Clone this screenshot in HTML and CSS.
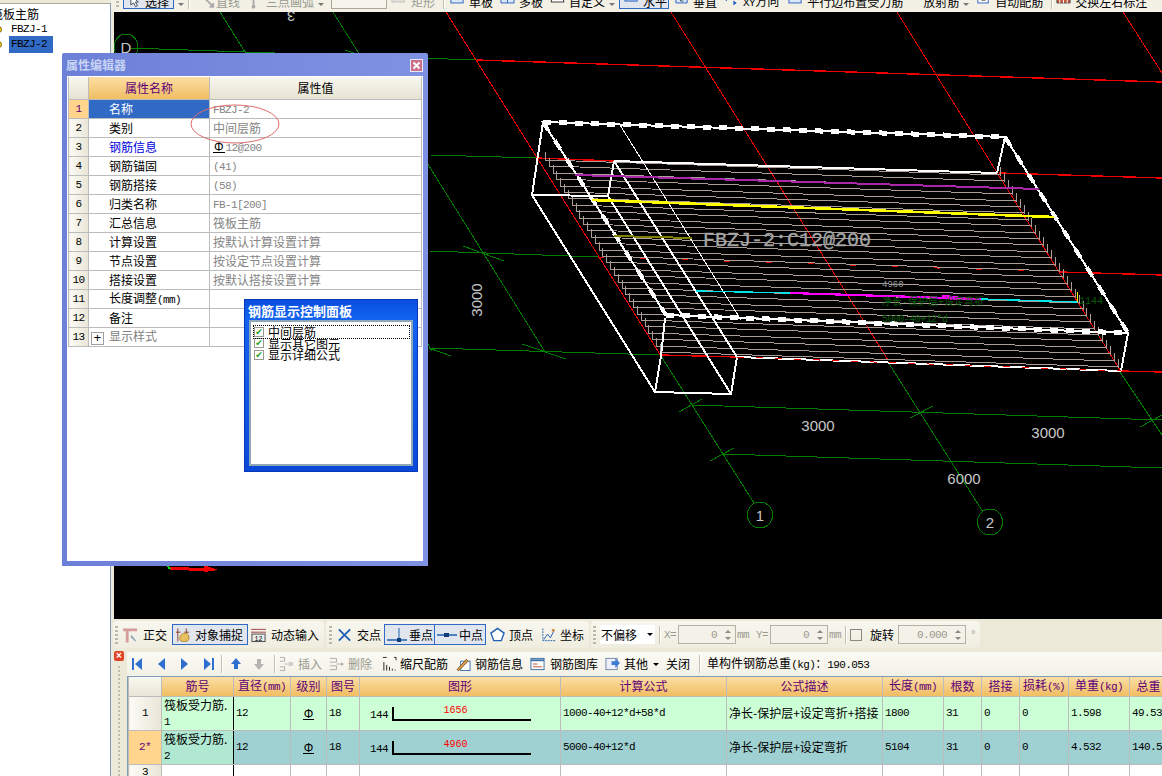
FILE: index.html
```html
<!DOCTYPE html>
<html>

<head>
    <meta http-equiv="Content-Type" content="text/html; charset=utf-8" />
    <title>钢筋三维</title>
    <link rel="stylesheet" href="styles.css">
</head>

<body>
    <div class="app">
        <!-- 左侧构件列表 -->
        <div class="tree">
            <p class="tree-root">筏板主筋</p>
            <p class="tree-item"><i class="ball"></i><span class="lat">FBZJ-1</span></p>
            <p class="tree-item"><i class="ball"></i><span class="lat sel">FBZJ-2</span></p>
        </div>

        <div class="main">
            <!-- 顶部工具条，上半部分被截掉 -->
            <div class="topbar">
                <span class="grip g-top"></span>
                <span class="tool btn-on t-sel"><svg class="ic" viewBox="0 0 16 16"><path d="M3 1v10l3-2 2 4 2-1-2-4h3z" fill="#fff" stroke="#345"/></svg>选择</span>
                <span class="arrow"></span>
                <span class="sep"></span>
                <span class="tool off t-line"><svg class="ic" viewBox="0 0 16 16"><path d="M2 2l11 11M9 13h4V9" fill="none" stroke="#aaa" stroke-width="2"/></svg>直线</span>
                <span class="tool off t-arc"><svg class="ic" viewBox="0 0 16 16"><path d="M8 0v13" stroke="#aaa" stroke-width="2"/><circle cx="8" cy="13" r="2" fill="#aaa"/></svg>三点画弧</span>
                <span class="arrow"></span>
                <span class="topinput"></span>
                <span class="tool off t-rect"><svg class="ic" viewBox="0 0 16 16"><rect x="1" y="0" width="13" height="8" fill="#e4e2d6" stroke="#bbb"/></svg>矩形</span>
                <span class="sep sep-top"></span>
                <span class="tool t-first"><svg class="ic" viewBox="0 0 16 16"><rect x="1" y="0" width="13" height="9" fill="#dbe8fb" stroke="#2b5fc0"/></svg>单板</span>
                <span class="tool"><svg class="ic" viewBox="0 0 16 16"><path d="M1 0h14v9H1zM8 0v9" fill="#dbe8fb" stroke="#2b5fc0"/></svg>多板</span>
                <span class="tool"><svg class="ic" viewBox="0 0 16 16"><path d="M1 8l3-8h8l3 8z" fill="#fff" stroke="#333"/></svg>自定义</span>
                <span class="arrow"></span>
                <span class="tool btn-on t-flat"><svg class="ic" viewBox="0 0 16 16"><rect x="1" y="0" width="13" height="7" fill="#bcd0ee" stroke="#2b5fc0"/></svg>水平</span>
                <span class="tool t-vert"><svg class="ic" viewBox="0 0 16 16"><path d="M2 0h12v9H2z" fill="#dbe8fb" stroke="#2b5fc0"/><path d="M7 0v7h3" fill="none" stroke="#345"/></svg>垂直</span>
                <span class="tool"><svg class="ic" viewBox="0 0 16 16"><path d="M2 1l3 3-3 3M1 4h9M10 7l3 2-3 2" fill="#2b5fc0" stroke="#2b5fc0"/></svg><span><span class="lat">XY</span>方向</span></span>
                <span class="tool t-par"><svg class="ic" viewBox="0 0 16 16"><rect x="1" y="0" width="13" height="9" fill="#dbe8fb" stroke="#2b5fc0"/><path d="M7.500 2l-2 3h4z" fill="#2b5fc0"/></svg>平行边布置受力筋</span>
                <span class="tool t-ray">放射筋</span>
                <span class="arrow"></span>
                <span class="tool"><svg class="ic" viewBox="0 0 16 16"><rect x="2" y="0" width="11" height="9" fill="#fff" stroke="#2b5fc0"/><path d="M6 0v6h4" fill="none" stroke="#333"/></svg>自动配筋</span>
                <span class="sep sep-end"></span>
                <span class="tool t-first"><svg class="ic" viewBox="0 0 16 16"><path d="M1 0h14v9H1z" fill="#c85a3c" stroke="#444"/><path d="M4 0v9M8 0v9M12 0v9" stroke="#fff"/></svg>交换左右标注</span>
            </div>

            <!-- 三维视图 -->
            <div class="view">
                <svg class="scene" viewBox="114 12 1048 607" width="1048" height="607">
                    <g class="g-line" fill="none">
                        <path d="M130 48L477 60M430 155L537 158M430 251L598 257M430 348L661 355M692 405L1162 420M723 454L1162 468"/>
                        <path d="M220 12L432 351M333 12L545 352M661 356L754 503M888 362L983 512M1120 372L1162 435"/>
                        <path d="M463 246L504 261M522 344L566 359M429 348L451 356M679 412L702 399M710 461L734 448M910 418L933 406M1140 427L1162 415M345 50L362 56"/>
                        <ellipse cx="126" cy="47" rx="12" ry="13"/>
                        <ellipse cx="760" cy="515" rx="12.500" ry="13"/>
                        <ellipse cx="990" cy="522" rx="12.500" ry="13"/>
                    </g>
                    <g class="r-line" fill="none">
                        <path d="M446 12L661 356M671 12L888 360M897 12L1120 370M1123 12L1162 73"/>
                    </g>
                    <g class="r-line r-thick" fill="none">
                        <path d="M477 60L1162 82M537 158L614 161M999 173L1162 178M1060 272L1162 275M661 355L737 357M1121 371L1162 372"/>
                    </g>
                    <path class="r-dash" d="M598 257L1060 272"/>

                    <!-- 31 根受力筋 -->
                    <path class="rebar" d="M545 152v8l455 15v-8M549 158v8l455 15v-8M553 165v8l455 15v-8M556 171v8l456 15v-8M560 178v8l456 15v-8M564 184v8l456 15v-8M568 190v8l456 15v-8M572 197v8l456 15v-8M576 203v8l455 15v-8M579 210v8l456 15v-8M583 216v8l456 15v-8M587 222v8l456 15v-8M591 229v8l456 15v-8M595 235v8l456 15v-8M599 242v8l456 15v-8M602 248v8l457 15v-8M606 254v8l457 15v-8M610 261v8l457 15v-8M614 267v8l457 15v-8M618 274v8l457 15v-8M622 280v8l457 15v-8M625 286v8l458 15v-8M629 293v8l457 15v-8M633 299v8l457 15v-8M637 306v8l457 15v-8M641 312v8l457 15v-8M645 318v8l457 15v-8M648 325v8l458 15v-8M652 331v8l458 15v-8M656 338v8l458 15v-8M660 344v8l458 15v-8"/>

                    <g class="w-line" fill="none">
                        <path d="M543 122L532 195L655 392L731 394L737 357M655 392L661 356L665 318M532 195L608 196L614 161M608 196L731 394M614 161L737 357M1005 137L997 173M1128 333L1121 371"/>
                        <path d="M614 161L997 173M737 357L1121 371"/>
                        <path class="w-thin" d="M620 125L741 320"/>
                    </g>
                    <path class="w-dash-base" d="M543 122L1005 137L1128 333L666 315z"/>
                    <path class="w-dash" d="M543 122L1005 137M666 315L1128 333"/>
                    <path class="w-dash w-dash-side" d="M1005 137L1128 333M543 122L666 315"/>
                    <path class="red-dash" d="M737 357L1121 371"/>

                    <path class="c-purple" d="M575 175L1039 189"/>
                    <path class="c-yellow" d="M592 200L1054 217"/>
                    <path class="c-olive" d="M614 236L692 238"/>
                    <path class="c-cyan" d="M696 291L790 293M981 299L1077 302"/>
                    <path class="c-magenta" d="M790 293L981 299"/>
                    <path class="c-magenta c-fat" d="M942 297L958 298"/>
                    <path class="c-yellow c-tick" d="M1077 292V302"/>

                    <path class="axis-x" d="M170 568L207 570"/>
                    <path class="axis-head" d="M204 565L218 570L204 572z"/>
                    <path class="axis-y" d="M166 564L170 569"/>

                    <text class="dim" x="818" y="431" text-anchor="middle">3000</text>
                    <text class="dim" x="1048" y="438" text-anchor="middle">3000</text>
                    <text class="dim" x="964" y="484" text-anchor="middle">6000</text>
                    <text class="dim" transform="translate(482 300) rotate(-90)" text-anchor="middle">3000</text>
                    <text class="dim" x="760" y="521" text-anchor="middle">1</text>
                    <text class="dim" x="990" y="528" text-anchor="middle">2</text>
                    <text class="dim" transform="translate(291 11) rotate(180)" text-anchor="middle">3</text>
                    <text class="dim" x="126" y="53" text-anchor="middle">D</text>
                    <text class="bar-label" x="703" y="246" textLength="168">FBZJ-2:C12@200</text>
                    <text class="small-gray" x="882" y="287">4960</text>
                    <text class="small-green" x="882" y="305">净长-保护层+设定弯折</text>
                    <text class="small-green" x="882" y="322" textLength="66">5000-40+12*d</text>
                    <text class="small-green" x="1079" y="304" textLength="24">1144</text>
                </svg>
            </div>

            <!-- 捕捉工具条 -->
            <div class="snapbar">
                <div class="seg seg-a">
                    <span class="grip"></span>
                    <span class="tool"><svg class="ic" viewBox="0 0 16 16"><path d="M0 1h15v3H6v12H3V4H0z" fill="#d89c9c"/><path d="M9 8l5 6-1 1-5-5z" fill="#8fa3b5"/></svg>正交</span>
                    <span class="tool btn-on"><svg class="ic" viewBox="0 0 16 16"><path d="M3 1v14M12 1v14" stroke="#8a3c2c"/><path d="M1 5h5M10 5h5" stroke="#8a3c2c"/><path d="M5 12c0-4 3-6 6-6 2 0 4 2 4 5s-2 4-5 4-5-1-5-3z" fill="#e8c060" stroke="#b08a30"/></svg>对象捕捉</span>
                    <span class="tool t-dyn"><svg class="ic" viewBox="0 0 16 16"><path d="M0 2h16M0 5h16" stroke="#a04040"/><rect x="1" y="7" width="14" height="8" fill="#eee" stroke="#444"/><text class="ic-text" x="8" y="14" text-anchor="middle">12</text></svg>动态输入</span>
                </div>
                <div class="seg seg-b">
                    <span class="grip"></span>
                    <span class="tool"><svg class="ic" viewBox="0 0 16 16"><path d="M2 2l12 12M14 2L2 14" stroke="#1f5fb4" stroke-width="2" fill="none"/></svg>交点</span>
                    <span class="tool btn-on t-snap"><svg class="ic ic-w" viewBox="0 0 20 16"><path d="M0 13h20" stroke="#1f5fb4" stroke-width="1.500"/><path d="M12 1v12" stroke="#1f5fb4"/><rect x="10" y="11" width="4" height="4" fill="#123c78"/></svg>垂点</span>
                    <span class="tool btn-on t-snap t-snap2"><svg class="ic ic-w" viewBox="0 0 20 16"><path d="M0 8h20" stroke="#1f5fb4" stroke-width="1.500"/><rect x="7" y="6" width="5" height="4" fill="#123c78"/></svg>中点</span>
                    <span class="tool t-top"><svg class="ic" viewBox="0 0 16 16"><path d="M8 1l7 5-3 8H4L1 6z" fill="#fff" stroke="#1f5fb4" stroke-width="1.500"/></svg>顶点</span>
                    <span class="tool t-xy"><svg class="ic" viewBox="0 0 16 16"><path d="M2 1v13h13" fill="none" stroke="#1f5fb4" stroke-dasharray="2 1"/><path d="M3 13l4-6 3 4 4-8" fill="none" stroke="#1f5fb4"/><circle cx="13" cy="3" r="1.500" fill="#d08030"/></svg>坐标</span>
                </div>
                <div class="seg seg-c">
                    <span class="grip"></span>
                    <span class="select">不偏移<span class="arrow arrow-dark"></span></span>
                    <span class="sep"></span>
                    <span class="lat off coord">X=</span>
                    <span class="spin"><span class="lat">0</span><span class="updown"><i></i><i></i></span></span>
                    <span class="lat off unit">mm</span>
                    <span class="lat off coord coord-y">Y=</span>
                    <span class="spin"><span class="lat">0</span><span class="updown"><i></i><i></i></span></span>
                    <span class="lat off unit">mm</span>
                    <span class="sep"></span>
                    <span class="check-empty"></span>
                    <span class="rot">旋转</span>
                    <span class="spin spin-rot"><span class="lat">0.000</span><span class="updown"><i></i><i></i></span></span>
                    <span class="lat off">°</span>
                </div>
            </div>

            <!-- 钢筋表格 -->
            <div class="panel">
                <div class="dock">
                    <span class="dock-close">×</span>
                    <span class="dock-dots"></span>
                </div>
                <div class="panel-body">
                    <div class="gridbar">
                        <span class="nav-ic"><svg viewBox="0 0 12 14" width="12" height="14"><path d="M1 1h2v12H1zM11 1v12L4 7z" fill="#2e6fd0"/></svg></span>
                        <span class="nav-ic"><svg viewBox="0 0 12 14" width="12" height="14"><path d="M10 1v12L3 7z" fill="#2e6fd0"/></svg></span>
                        <span class="nav-ic"><svg viewBox="0 0 12 14" width="12" height="14"><path d="M2 1v12l7-6z" fill="#2e6fd0"/></svg></span>
                        <span class="nav-ic nav-last"><svg viewBox="0 0 12 14" width="12" height="14"><path d="M1 1v12l7-6zM9 1h2v12H9z" fill="#2e6fd0"/></svg></span>
                        <span class="sep sep-nav"></span>
                        <span class="nav-ic nav-up"><svg viewBox="0 0 12 14" width="12" height="14"><path d="M6 1l5 6H8v5H4V7H1z" fill="#2e6fd0"/></svg></span>
                        <span class="nav-ic nav-last"><svg viewBox="0 0 12 14" width="12" height="14"><path d="M6 13l5-6H8V2H4v5H1z" fill="#b4b4b4"/></svg></span>
                        <span class="sep sep-tight"></span>
                        <span class="tool off t-ins"><svg class="ic" viewBox="0 0 16 16"><path d="M1 1h5v4H1M1 11h5v4H1M6 8h3" fill="none" stroke="#aaa"/><rect x="10" y="6" width="5" height="4" fill="#ccc"/></svg>插入</span>
                        <span class="tool off"><svg class="ic" viewBox="0 0 16 16"><path d="M1 2h7v4H1M1 10h7v4H1M8 8h6" fill="none" stroke="#aaa"/><path d="M13 6l3 2-3 2z" fill="#aaa"/></svg>删除</span>
                        <span class="tool t-scale"><svg class="ic" viewBox="0 0 16 16"><path d="M1 1h4M13 1h2M15 1v3M2 6v9M5 9v6M8 11v4M11 13v2M14 14v1" fill="none" stroke="#222"/></svg>缩尺配筋</span>
                        <span class="tool t-info"><svg class="ic" viewBox="0 0 16 16"><rect x="5" y="5" width="10" height="10" fill="#fff" stroke="#3a6ea5"/><path d="M1 14L11 3l2 2L3 15z" fill="#d8a050" stroke="#805020"/></svg>钢筋信息</span>
                        <span class="tool t-lib"><svg class="ic" viewBox="0 0 16 16"><rect x="1" y="2" width="14" height="12" fill="#fff" stroke="#3a6ea5"/><path d="M1 3h14v2H1z" fill="#3a6ea5"/><path d="M3 8h5M3 11h10" stroke="#c05030"/></svg>钢筋图库</span>
                        <span class="tool"><svg class="ic" viewBox="0 0 16 16"><rect x="1" y="2" width="12" height="12" fill="#eef" stroke="#7088a8"/><path d="M7 5h4V2l5 5-5 5V9H7z" fill="#3a7ad0"/></svg>其他</span>
                        <span class="arrow arrow-dark"></span>
                        <span class="tool">关闭</span>
                        <span class="sep"></span>
                        <span class="tool"><span>单构件钢筋总重<span class="lat">(kg)</span>：<span class="lat">190.053</span></span></span>
                    </div>
                    <div class="gridwrap">
                        <table class="grid">
                            <colgroup>
                                <col class="c1"><col class="c2"><col class="c3"><col class="c4"><col class="c5"><col class="c6"><col class="c7"><col class="c8"><col class="c9"><col class="c10"><col class="c11"><col class="c12"><col class="c13"><col class="c14">
                            </colgroup>
                            <tr class="head">
                                <th class="corner"></th><th>筋号</th><th>直径<span class="lat">(mm)</span></th><th>级别</th><th>图号</th><th>图形</th><th>计算公式</th><th>公式描述</th><th>长度<span class="lat">(mm)</span></th><th>根数</th><th>搭接</th><th>损耗<span class="lat">(%)</span></th><th>单重<span class="lat">(kg)</span></th><th>总重</th>
                            </tr>
                            <tr class="row-a">
                                <td class="rh lat">1</td>
                                <td class="name wall">筏板受力筋.<br><span class="lat">1</span></td>
                                <td class="lat">12</td>
                                <td class="ctr"><span class="grade">Φ</span></td>
                                <td class="lat">18</td>
                                <td class="shape"><span class="shape-n lat">144</span><span class="shape-l"><span class="shape-v">1656</span></span></td>
                                <td class="lat">1000-40+12*d+58*d</td>
                                <td class="desc">净长-保护层+设定弯折+搭接</td>
                                <td class="lat">1800</td><td class="lat">31</td><td class="lat">0</td><td class="lat">0</td><td class="lat">1.598</td><td class="lat">49.538</td>
                            </tr>
                            <tr class="row-b">
                                <td class="rh rh-on lat">2*</td>
                                <td class="name name-b wall">筏板受力筋.<br><span class="lat">2</span></td>
                                <td class="lat">12</td>
                                <td class="ctr"><span class="grade">Φ</span></td>
                                <td class="lat">18</td>
                                <td class="shape"><span class="shape-n lat">144</span><span class="shape-l"><span class="shape-v">4960</span></span></td>
                                <td class="lat">5000-40+12*d</td>
                                <td class="desc">净长-保护层+设定弯折</td>
                                <td class="lat">5104</td><td class="lat">31</td><td class="lat">0</td><td class="lat">0</td><td class="lat">4.532</td><td class="lat">140.515</td>
                            </tr>
                            <tr class="row-c">
                                <td class="rh lat">3</td>
                                <td class="wall"></td><td></td><td></td><td></td><td></td><td></td><td></td><td></td><td></td><td></td><td></td><td></td><td></td>
                            </tr>
                        </table>
                    </div>
                </div>
            </div>
        </div>

        <!-- 属性编辑器窗口 -->
        <div class="win-prop">
            <div class="win-title">属性编辑器<svg class="win-x" viewBox="0 0 13 13" width="13" height="13"><rect x=".5" y=".5" width="12" height="12" fill="#c96f8c" stroke="#e8e8f8"/><path d="M3.500 3.500l6 6M9.500 3.500l-6 6" stroke="#fff" stroke-width="2"/></svg></div>
            <div class="win-body">
                <table class="props">
                    <colgroup><col class="p1"><col class="p2"><col class="p3"></colgroup>
                    <tr class="p-head"><th class="p-corner"></th><th class="p-on">属性名称</th><th>属性值</th></tr>
                    <tr><td class="rh rh-on lat">1</td><td class="k k-sel">名称</td><td class="v"><span class="lat">FBZJ-2</span></td></tr>
                    <tr><td class="rh lat">2</td><td class="k">类别</td><td class="v">中间层筋</td></tr>
                    <tr><td class="rh lat">3</td><td class="k k-blue">钢筋信息</td><td class="v"><span class="grade grade-sm">Φ</span><span class="lat">12@200</span></td></tr>
                    <tr><td class="rh lat">4</td><td class="k">钢筋锚固</td><td class="v"><span class="lat">(41)</span></td></tr>
                    <tr><td class="rh lat">5</td><td class="k">钢筋搭接</td><td class="v"><span class="lat">(58)</span></td></tr>
                    <tr><td class="rh lat">6</td><td class="k">归类名称</td><td class="v"><span class="lat">FB-1[200]</span></td></tr>
                    <tr><td class="rh lat">7</td><td class="k">汇总信息</td><td class="v">筏板主筋</td></tr>
                    <tr><td class="rh lat">8</td><td class="k">计算设置</td><td class="v">按默认计算设置计算</td></tr>
                    <tr><td class="rh lat">9</td><td class="k">节点设置</td><td class="v">按设定节点设置计算</td></tr>
                    <tr><td class="rh lat">10</td><td class="k">搭接设置</td><td class="v">按默认搭接设置计算</td></tr>
                    <tr><td class="rh lat">11</td><td class="k">长度调整<span class="lat">(mm)</span></td><td class="v"></td></tr>
                    <tr><td class="rh lat">12</td><td class="k">备注</td><td class="v"></td></tr>
                    <tr><td class="rh lat">13</td><td class="k k-more"><span class="plus">+</span>显示样式</td><td class="v"></td></tr>
                </table>
                <svg class="mark" viewBox="0 0 92 42" width="92" height="42"><ellipse cx="46" cy="21" rx="44" ry="19" fill="none" stroke="#e06a6a"/></svg>
            </div>
        </div>

        <!-- 钢筋显示控制面板 -->
        <div class="win-ctrl">
            <div class="ctrl-title">钢筋显示控制面板</div>
            <ul class="ctrl-list">
                <li class="focus"><span class="cb">✔</span>中间层筋</li>
                <li><span class="cb">✔</span>显示其它图元</li>
                <li><span class="cb">✔</span>显示详细公式</li>
            </ul>
        </div>
    </div>
</body>

</html>
```

FILE: styles.css
```css
* {
    margin: 0;
    padding: 0;
    box-sizing: border-box;
    list-style: none;
}

html,
body {
    width: 1162px;
    height: 776px;
    overflow: hidden;
}

body {
    font: 12px/14px "Noto Sans CJK SC", sans-serif;
    color: #000;
    background: #ece9d8;
}

.lat {
    font-family: "Liberation Mono", monospace;
    font-size: 11px;
    letter-spacing: -.6px;
}

.app {
    position: relative;
    width: 1162px;
    height: 776px;
    display: flex;
    overflow: hidden;
}

/* 左侧 */
.tree {
    width: 111px;
    height: 776px;
    flex: none;
    margin-top: 3px;
    padding-top: 3px;
    background: #fff;
    border-right: 1px solid #7f9db9;
    border-top: 1px solid #aca899;
    overflow: hidden;
}

.tree-root {
    margin-left: -9px;
    height: 15px;
    line-height: 14px;
}

.tree-item {
    height: 15px;
    display: flex;
    align-items: center;
    line-height: 15px;
}

.ball {
    width: 7px;
    height: 7px;
    margin-left: -5px;
    margin-right: 9px;
    border-radius: 50%;
    background: #f3d820;
    border: 1px solid #806000;
}

.sel {
    background: #316ac5;
    color: #000;
    margin-left: -2px;
    padding: 1px 6px 1px 2px;
}

.main {
    flex: 1;
    display: flex;
    flex-direction: column;
    min-width: 0;
}

/* 顶部工具条 */
.topbar {
    height: 12px;
    display: flex;
    align-items: flex-end;
    padding: 0 0 3px 5px;
    gap: 4px;
    background: #f3f1e6;
    white-space: nowrap;
    overflow: hidden;
}

.tool {
    display: flex;
    align-items: center;
    gap: 5px;
    height: 16px;
    flex: none;
}

.topbar .tool {
    height: 14px;
    padding-bottom: 1px;
    gap: 4px;
    margin-left: 3px;
}

.ic {
    width: 15px;
    height: 16px;
    flex: none;
}

.ic-w {
    width: 20px;
}

.ic-text {
    font: 7px "Liberation Mono", monospace;
}

.off {
    color: #9a9a90;
}

.btn-on {
    border: 1px solid #316ac5;
    background: #e1e6ee;
    padding: 0 4px;
}

.topbar .t-sel {
    width: 51px;
    margin-left: 0;
    gap: 2px;
    padding: 0 0 1px 4px;
}

.topbar .t-flat {
    width: 50px;
    margin-left: 0;
    padding: 0 0 1px 4px;
}

.topbar .t-vert {
    margin-left: 1px;
}

.topbar .t-line {
    margin-left: 8px;
    gap: 0;
}

.topbar .t-arc {
    gap: 5px;
    margin-left: 2px;
}

.topbar .t-rect {
    gap: 5px;
    margin-left: 0;
}

.topbar .t-first {
    margin-left: 0;
}

.topbar .t-par {
    margin-left: 5px;
}

.topbar .t-ray {
    margin-left: 16px;
}

.sep-top {
    margin: 0 2px 0 4px;
}

.sep-end {
    margin-left: 4px;
}

.topinput {
    width: 56px;
    height: 14px;
    margin-left: 3px;
    border: 1px solid #aca899;
    background: #f5f4ea;
    flex: none;
}

.topbar .sep {
    height: 12px;
}

.arrow {
    width: 0;
    height: 0;
    flex: none;
    border: 3px solid transparent;
    border-top: 3px solid #777;
    border-bottom: 0;
    align-self: center;
}

.arrow-dark {
    border-top-color: #000;
}

.sep {
    width: 1px;
    height: 18px;
    flex: none;
    background: #c4c1b4;
    box-shadow: 1px 0 0 #fff;
}

.grip {
    width: 3px;
    height: 18px;
    flex: none;
    background: repeating-linear-gradient(#bdb9aa 0 2px, transparent 2px 4px);
}

.g-top {
    height: 12px;
}

/* 三维视图 */
.view {
    height: 607px;
    padding-left: 3px;
    flex: none;
}

.scene {
    display: block;
    background: #000;
    shape-rendering: crispEdges;
}

.g-line {
    stroke: #007c00;
}

.r-line {
    stroke: #f00000;
}

.r-thick {
    stroke-width: 1.400;
}

.r-dash {
    fill: none;
    stroke: #e00000;
    stroke-dasharray: 6 36;
}

.rebar {
    fill: none;
    stroke: #ab9d96;
}

.w-line {
    stroke: #fff;
    stroke-width: 2;
}

.w-thin {
    stroke-width: 1;
}

.w-dash-base {
    fill: none;
    stroke: #fff;
    stroke-width: 2;
}

.w-dash {
    fill: none;
    stroke: #fff;
    stroke-width: 5;
    stroke-dasharray: 8 8;
}

.w-dash-side {
    stroke-width: 4;
    stroke-dasharray: 10 12;
}

.red-dash {
    fill: none;
    stroke: #f00000;
    stroke-width: 1;
    stroke-dasharray: 7 12;
}

.c-purple {
    fill: none;
    stroke: #a828a8;
    stroke-width: 2;
}

.c-yellow {
    fill: none;
    stroke: #ffff00;
    stroke-width: 2.600;
}

.c-tick {
    stroke-width: 1;
}

.c-olive {
    fill: none;
    stroke: #808000;
    stroke-width: 2;
}

.c-cyan {
    fill: none;
    stroke: #00e6e6;
    stroke-width: 1.400;
}

.c-magenta {
    fill: none;
    stroke: #ff00ff;
    stroke-width: 2.200;
}

.c-fat {
    stroke-width: 4;
}

.axis-x {
    fill: none;
    stroke: #f00000;
    stroke-width: 3;
}

.axis-head {
    fill: #f00000;
}

.axis-y {
    fill: none;
    stroke: #00e000;
    stroke-width: 2;
}

.dim {
    font: 15px "Liberation Sans", sans-serif;
    fill: #c8c8c8;
    shape-rendering: auto;
}

.bar-label {
    font: 20px "Liberation Mono", monospace;
    fill: #aaa;
    stroke: #999;
    stroke-width: .4;
}

.small-gray {
    font: 9px "Liberation Mono", monospace;
    fill: #999;
}

.small-green {
    font: 10px "Liberation Mono", "Noto Sans CJK SC", monospace;
    fill: #0a5a0a;
}

/* 捕捉工具条 */
.snapbar {
    height: 29px;
    margin-top: 1px;
    display: flex;
    align-items: stretch;
    padding: 1px 0 0 2px;
    flex: none;
    white-space: nowrap;
}

.seg {
    height: 27px;
    display: flex;
    align-items: center;
    gap: 5px;
    padding-left: 9px;
    margin-right: 2px;
    border-radius: 4px;
    background: linear-gradient(#f8f7f0, #efedde);
    flex: none;
}

.seg-a {
    width: 211px;
    padding-left: 2px;
}

.seg-a .btn-on {
    height: 21px;
    padding: 0 4px 0 2px;
}

.t-dyn {
    margin-left: -2px;
}

.seg-b {
    width: 263px;
    padding-left: 3px;
}

.seg-b .t-snap {
    height: 21px;
    width: 51px;
    margin-left: -2px;
    gap: 2px;
    padding: 0 2px;
    justify-content: flex-start;
}

.seg-b .t-snap2 {
    margin-left: -5px;
    border-left: 0;
}

.t-top {
    margin-left: -1px;
    gap: 4px;
}

.t-xy {
    margin-left: 3px;
    gap: 4px;
}

.seg-c {
    width: 389px;
    padding-left: 2px;
    gap: 4px;
}

.select {
    width: 55px;
    height: 19px;
    display: flex;
    align-items: center;
    justify-content: space-between;
    padding: 0 2px 0 1px;
    background: #fff;
    flex: none;
}

.coord {
    width: 10px;
}

.coord-y {
    margin-left: 3px;
}

.unit {
    width: 12px;
    margin-left: -3px;
}

.spin {
    width: 58px;
    height: 19px;
    display: flex;
    align-items: center;
    justify-content: flex-end;
    gap: 8px;
    padding-right: 4px;
    border: 1px solid #b5b2a5;
    color: #9a9a90;
    background: #f4f2e8;
    flex: none;
}

.spin-rot {
    width: 68px;
}

.updown {
    display: flex;
    flex-direction: column;
    gap: 4px;
}

.updown i {
    display: block;
    border: 3px solid transparent;
    border-top: 0;
    border-bottom: 3px solid #8a8a80;
}

.updown i:last-child {
    border-bottom: 0;
    border-top: 3px solid #8a8a80;
}

.check-empty {
    width: 12px;
    height: 12px;
    border: 1px solid #8a8a80;
    flex: none;
}

.rot {
    margin-left: 4px;
}

/* 表格面板 */
.panel {
    flex: 1;
    display: flex;
    min-height: 0;
}

.dock {
    width: 16px;
    flex: none;
    display: flex;
    flex-direction: column;
    align-items: center;
    padding-top: 2px;
}

.dock-close {
    width: 10px;
    height: 10px;
    font: bold 10px/10px "Liberation Sans", sans-serif;
    text-align: center;
    color: #fff;
    background: #e04428;
    border-radius: 2px;
}

.dock-dots {
    width: 2px;
    flex: 1;
    margin-top: 5px;
    background: repeating-linear-gradient(#c0bdae 0 2px, transparent 2px 4px);
}

.panel-body {
    flex: 1;
    min-width: 0;
    padding-top: 3px;
}

.gridbar {
    height: 24px;
    display: flex;
    align-items: center;
    gap: 5px;
    padding-left: 4px;
    white-space: nowrap;
    background: linear-gradient(#fbfaf4, #f3f1e6);
}

.nav-ic {
    width: 12px;
    height: 14px;
    flex: none;
    margin-right: 7px;
}

.nav-up {
    margin-right: 6px;
}

.nav-last {
    margin-right: 0;
}

.gridbar .sep {
    margin-left: 4px;
}

.gridbar .sep-nav {
    margin: 0 3px 0 1px;
}

.gridbar .sep-tight {
    margin-right: -1px;
}

.gridbar .tool {
    gap: 4px;
    margin-left: 2px;
}

.gridbar .t-ins {
    margin-left: 0;
}

.gridbar .t-scale {
    margin-left: 5px;
    gap: 3px;
}

.gridbar .t-info {
    margin-left: 3px;
}

.gridbar .t-lib {
    gap: 5px;
}

.gridwrap {
    height: 101px;
    overflow: hidden;
    border-top: 1px solid #7f9db9;
    border-left: 1px solid #7f9db9;
}

.grid,
.props {
    border-collapse: collapse;
    table-layout: fixed;
}

.grid {
    width: 1039px;
}

.c1 { width: 33px; }
.c2 { width: 72px; }
.c3 { width: 57px; }
.c4 { width: 36px; }
.c5 { width: 33px; }
.c6 { width: 201px; }
.c7 { width: 166px; }
.c8 { width: 156px; }
.c9 { width: 61px; }
.c10 { width: 38px; }
.c11 { width: 38px; }
.c12 { width: 49px; }
.c13 { width: 61px; }
.c14 { width: 38px; }

th,
td {
    border: 1px solid #bcbcbc;
    font-weight: 400;
    overflow: hidden;
    white-space: nowrap;
}

.head th {
    height: 19px;
    padding: 0;
    text-align: center;
    color: #600078;
    background: linear-gradient(#fbdea4, #f0bd62);
    border-top: 0;
}

.head .corner,
.p-corner {
    background: linear-gradient(#f8f7f0, #e9e6d6);
}

.grid td {
    height: 34px;
    padding: 0 2px;
}

.grid .row-c td {
    height: 12px;
}

.row-a td {
    background: #ccffd6;
}

.row-b td {
    background: #9fd1d2;
}

.row-c td {
    background: #fff;
}

.grid td.rh,
.props td.rh {
    padding: 0;
    text-align: center;
    background: linear-gradient(90deg, #fbfaf5, #e9e6d6);
}

.grid td.rh-on,
.props td.rh-on {
    color: #600078;
    background: #ffd48c;
}

.grid .row-c .rh {
    vertical-align: top;
}

.name {
    line-height: 15px;
    white-space: normal;
}

.grid td.name-b {
    background: #b0e8d2;
}

.wall {
    border-right: 1px solid #000;
}

.ctr {
    text-align: center;
}

.grade {
    font: 12px "Liberation Sans", sans-serif;
    border-bottom: 1px solid #000;
    padding: 0 1px;
    line-height: 10px;
    display: inline-block;
}

.grade-sm {
    color: #000;
    margin-right: 1px;
}

.grid td.shape {
    padding: 0 0 0 10px;
}

.shape-n {
    float: left;
    margin-top: 3px;
    width: 22px;
}

.shape-l {
    display: block;
    float: left;
    width: 139px;
    height: 14px;
    margin-top: 2px;
    border-left: 2px solid #000;
    border-bottom: 2px solid #000;
    text-align: center;
}

.shape-v {
    display: block;
    margin-top: -2px;
    padding-right: 14px;
    color: #f00;
    font: 10px/12px "Liberation Mono", monospace;
}

.desc {
    text-align: left;
}

/* 属性编辑器 */
.win-prop {
    position: absolute;
    left: 62px;
    top: 53px;
    width: 366px;
    height: 513px;
    display: flex;
    flex-direction: column;
    padding: 0 5px 5px;
    background: linear-gradient(90deg, #6d80d8, #7f92e2);
    border-radius: 2px 2px 0 0;
}

.win-title {
    height: 23px;
    display: flex;
    align-items: center;
    justify-content: space-between;
    padding: 1px 0 0;
    margin-left: -1px;
    font-weight: 700;
    color: #c8d4f4;
    flex: none;
}

.win-x {
    display: block;
    flex: none;
}

.win-body {
    position: relative;
    flex: 1;
    padding: 1px 0 0 1px;
    background: #fff;
}

.props {
    width: 353px;
}

.p1 { width: 20px; }
.p2 { width: 121px; }
.p3 { width: 212px; }

.p-head th {
    height: 22px;
    padding: 0;
    text-align: center;
    background: linear-gradient(#f8f7f0, #e6e3d2);
    border-top: 0;
}

.p-head .p-on {
    color: #600078;
    background: linear-gradient(#fbdea4, #f0bd62);
}

.props td {
    height: 19px;
    padding: 0;
}

.props td.k {
    padding-left: 20px;
}

.props td.k-sel {
    color: #fff;
    background: #316ac5;
}

.props td.k-blue {
    color: #0000e0;
}

.props td.k-more {
    padding-left: 2px;
    color: #808080;
}

.plus {
    display: inline-block;
    width: 13px;
    height: 13px;
    margin-right: 5px;
    border: 1px solid #a0a0a0;
    color: #000;
    font: 13px/11px "Liberation Mono", monospace;
    text-align: center;
    vertical-align: -1px;
}

.props td.v {
    padding-left: 3px;
    color: #858585;
}

.mark {
    position: absolute;
    left: 122px;
    top: 27px;
}

/* 控制面板 */
.win-ctrl {
    position: absolute;
    left: 244px;
    top: 299px;
    width: 174px;
    height: 173px;
    padding: 0 4px 5px;
    display: flex;
    flex-direction: column;
    background: linear-gradient(#0a4fe0, #1264f0 20px, #0a48d8);
    border: 1px solid #0838b8;
}

.ctrl-title {
    height: 20px;
    margin-left: -1px;
    color: #fff;
    font-size: 13px;
    font-weight: 700;
    line-height: 22px;
    white-space: nowrap;
    flex: none;
}

.ctrl-list {
    flex: 1;
    padding: 4px 2px 0 3px;
    background: #fff;
    border: 2px solid #8fa6b8;
}

.ctrl-list li {
    height: 11.500px;
    display: flex;
    align-items: center;
    line-height: 11px;
    white-space: nowrap;
}

.cb {
    width: 10px;
    height: 10px;
    margin-right: 4px;
    border: 1px solid #9a9a90;
    font: bold 9px/8px "DejaVu Sans", sans-serif;
    text-align: center;
    color: #20a020;
    flex: none;
}

.focus {
    outline: 1px dotted #000;
}
```
